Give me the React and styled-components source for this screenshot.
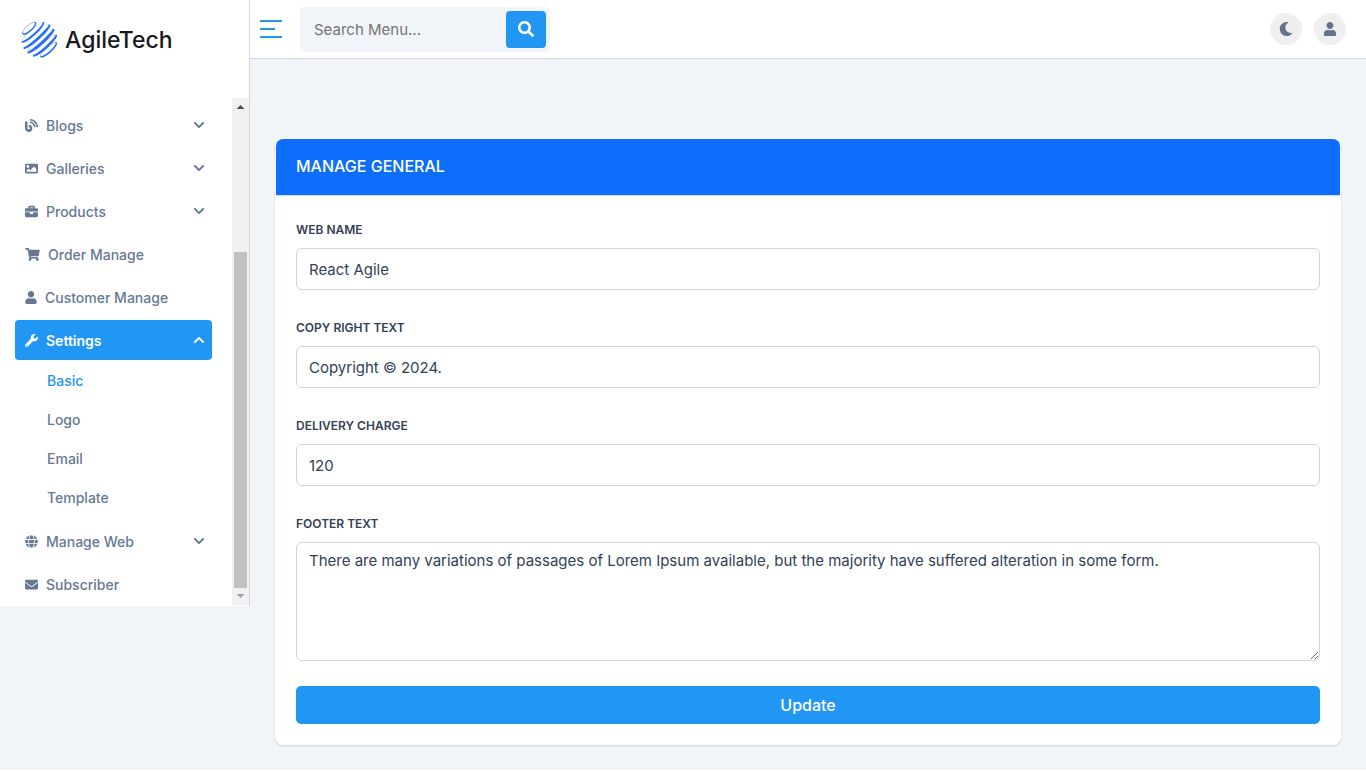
import React, { useState } from "react";
import styled, { createGlobalStyle } from "styled-components";

//Icons
import {
  FaBlog,
  FaBriefcase,
  FaChevronDown,
  FaChevronUp,
  FaEnvelope,
  FaGlobe,
  FaImage,
  FaMoon,
  FaSearch,
  FaShoppingCart,
  FaUser,
  FaWrench,
} from "react-icons/fa";

const GlobalStyle = createGlobalStyle`
  *, *::before, *::after {
    box-sizing: border-box;
  }
  body {
    margin: 0;
    background: #ffffff;
    color: #334155;
    font-family: "Inter", "Liberation Sans", sans-serif;
    font-size: 15px;
  }
  button, input, textarea {
    font-family: inherit;
  }
`;

const Layout = styled.div`
  display: flex;
  align-items: flex-start;
  background: #f1f4f9;
`;

const Sidebar = styled.aside`
  flex: 0 0 250px;
  background: #ffffff;
  border-right: 1px solid #d3d5d8;
  padding-bottom: 1px;
`;

const Brand = styled.a`
  display: flex;
  align-items: center;
  gap: 7px;
  height: 98px;
  padding: 0 20px 20px;
  color: #18191c;
  font-size: 23px;
  font-weight: 500;
  text-decoration: none;
`;

const BrandName = styled.span`
  padding-top: 2px;
`;

const Scroller = styled.div`
  display: flex;
`;

const Nav = styled.nav`
  flex: 1;
  display: flex;
  flex-direction: column;
  gap: 3px;
  padding: 7px 20px 1px 15px;
`;

const NavRow = styled.button`
  display: flex;
  align-items: center;
  gap: 8px;
  width: 100%;
  height: 40px;
  padding: 0 7px 0 10px;
  border: none;
  border-radius: 4px;
  background: ${({ $active }) => ($active ? "#2196f3" : "transparent")};
  color: ${({ $active }) => ($active ? "#ffffff" : "#667894")};
  font-size: 14px;
  font-weight: ${({ $active }) => ($active ? 600 : 500)};
  text-align: left;
  text-decoration: none;
  cursor: pointer;

  svg:first-child {
    width: ${({ $iconWidth }) => $iconWidth || 13}px;
    height: 13px;
  }
  svg:last-child {
    width: 12px;
    height: 12px;
  }
`;

const NavText = styled.span`
  flex: 1;
`;

const SubMenu = styled.div`
  display: flex;
  flex-direction: column;
  padding-top: 2px;
`;

const SubLink = styled.a`
  height: 39px;
  padding-left: 32px;
  line-height: 37px;
  color: ${({ $active }) => ($active ? "#2196f3" : "#667894")};
  font-size: 14px;
  font-weight: 500;
  text-decoration: none;
`;

const ScrollTrack = styled.div`
  display: flex;
  flex-direction: column;
  align-items: center;
  width: 17px;
  background: #f1f1f1;
`;

const ScrollArrow = styled.svg`
  width: 17px;
  height: 17px;
  fill: ${({ $dim }) => ($dim ? "#a3a3a3" : "#505050")};
`;

const ScrollThumb = styled.div`
  width: 13px;
  height: 336px;
  margin-top: auto;
  background: #c1c1c1;
`;

const Content = styled.div`
  flex: 1;
  min-width: 0;
`;

const Topbar = styled.header`
  display: flex;
  align-items: center;
  height: 59px;
  padding: 0 20px 0 10px;
  background: #ffffff;
  border-bottom: 1px solid #d3d5d8;
`;

const MenuToggle = styled.button`
  display: flex;
  flex-direction: column;
  gap: 6px;
  width: 22px;
  padding: 0;
  border: none;
  background: none;
  cursor: pointer;
`;

const Bar = styled.span`
  width: ${({ $short }) => ($short ? "15px" : "22px")};
  height: 2px;
  background: #2196f3;
`;

const Search = styled.form`
  display: flex;
  width: 250px;
  height: 45px;
  margin-left: 18px;
  padding: 4px;
  border-radius: 5px;
  background: #f1f4f9;
`;

const SearchInput = styled.input`
  flex: 1;
  min-width: 0;
  padding: 0 10px;
  border: none;
  outline: none;
  background: transparent;
  font-size: 15px;

  &::placeholder {
    color: #757575;
  }
`;

const SearchButton = styled.button`
  display: flex;
  align-items: center;
  justify-content: center;
  width: 40px;
  padding: 0;
  border: none;
  border-radius: 4px;
  background: #2196f3;
  color: #ffffff;
  font-size: 16px;
  cursor: pointer;
`;

const Actions = styled.div`
  display: flex;
  gap: 12px;
  margin-left: auto;
`;

const RoundButton = styled.button`
  display: flex;
  align-items: center;
  justify-content: center;
  width: 32px;
  height: 32px;
  padding: 0;
  border: none;
  border-radius: 50%;
  background: #efefef;
  color: #64748b;
  font-size: 14px;
  cursor: pointer;
`;

const Main = styled.main`
  padding: 79px 25px 25px;
`;

const Card = styled.section`
  border: 1px solid #ffffff;
  border-radius: 8px;
  background: #ffffff;
  box-shadow: 0 1px 2px rgba(24, 40, 60, 0.14);
`;

const CardHeader = styled.div`
  padding: 0 20px 2px;
  border-bottom: 1px solid #cfdcf0;
  border-radius: 7px 7px 0 0;
  background: #0d6efd;
`;

const CardTitle = styled.h1`
  margin: 0;
  color: #ffffff;
  font-size: 16px;
  font-weight: 500;
  line-height: 54px;
  text-transform: uppercase;
`;

const Form = styled.form`
  display: flex;
  flex-direction: column;
  gap: 25px;
  padding: 21px 20px 20px;
`;

const Field = styled.div`
  display: flex;
  flex-direction: column;
  gap: 8px;
`;

const Label = styled.label`
  padding-top: 3px;
  color: #334155;
  font-size: 12px;
  font-weight: 600;
  line-height: 20px;
  text-transform: uppercase;
`;

const Input = styled.input`
  width: 100%;
  height: 42px;
  padding: 0 12px;
  border: 1px solid #d3d5d8;
  border-radius: 6px;
  background: #ffffff;
  color: #334155;
  font-size: 15px;
`;

const TextArea = styled.textarea`
  display: block;
  width: 100%;
  height: 119px;
  padding: 7px 12px;
  border: 1px solid #d3d5d8;
  border-radius: 6px;
  background: #ffffff;
  color: #334155;
  font-size: 15px;
  line-height: 22px;
  resize: vertical;
`;

const SubmitButton = styled.button`
  height: 38px;
  border: none;
  border-radius: 5px;
  background: #2196f3;
  color: #ffffff;
  font-size: 16px;
  font-weight: 500;
  cursor: pointer;
`;

const settingsLinks = ["Basic", "Logo", "Email", "Template"];

// offset from the centre of the globe and weight of each ring
const rings = [
  { y: -14.5, rx: 9, w: 1 },
  { y: -9, rx: 15, w: 1.7 },
  { y: -3, rx: 18, w: 2.4 },
  { y: 3, rx: 18, w: 2.7 },
  { y: 9, rx: 16, w: 2.2 },
  { y: 14.5, rx: 11, w: 1.3 },
];

const ellipse = (y, rx, ry) =>
  `M${-rx} ${y}a${rx} ${ry} 0 1 0 ${rx * 2} 0a${rx} ${ry} 0 1 0 ${-rx * 2} 0z`;

const LogoMark = () => (
  <svg width="38" height="38" viewBox="-19 -19 38 38" aria-hidden="true">
    <g transform="rotate(-42)" fill="#2a6ff5" fillRule="evenodd">
      {rings.map(({ y, rx, w }) => (
        <path
          key={y}
          d={ellipse(y, rx, 3.3) + ellipse(y - w / 2, rx - 1.2, 2.9 - w / 2)}
        />
      ))}
    </g>
  </svg>
);

const App = () => {
  const [open, setOpen] = useState("Settings");
  const [search, setSearch] = useState("");
  const [general, setGeneral] = useState({
    webName: "React Agile",
    copyright: "Copyright © 2024.",
    delivery: "120",
    footer:
      "There are many variations of passages of Lorem Ipsum available, but the majority have suffered alteration in some form.",
  });

  const onChangeHandle = (e) => {
    setGeneral({ ...general, [e.target.id]: e.target.value });
  };

  const onSubmitHandle = (e) => {
    e.preventDefault();
  };

  const renderGroup = (name, icon) => (
    <NavRow
      type="button"
      $active={open === name}
      aria-expanded={open === name}
      onClick={() => setOpen(open === name ? "" : name)}
    >
      {icon}
      <NavText>{name}</NavText>
      {open === name ? <FaChevronUp /> : <FaChevronDown />}
    </NavRow>
  );

  return (
    <>
      <GlobalStyle />
      <Layout>
        <Sidebar>
          <Brand href="#home">
            <LogoMark />
            <BrandName>AgileTech</BrandName>
          </Brand>
          <Scroller>
            <Nav>
              {renderGroup("Blogs", <FaBlog />)}
              {renderGroup("Galleries", <FaImage />)}
              {renderGroup("Products", <FaBriefcase />)}
              <NavRow as="a" href="#orders" $iconWidth={15}>
                <FaShoppingCart />
                <NavText>Order Manage</NavText>
              </NavRow>
              <NavRow as="a" href="#customers" $iconWidth={12}>
                <FaUser />
                <NavText>Customer Manage</NavText>
              </NavRow>
              <div>
                {renderGroup("Settings", <FaWrench />)}
                {open === "Settings" && (
                  <SubMenu>
                    {settingsLinks.map((link) => (
                      <SubLink
                        key={link}
                        href={`#${link.toLowerCase()}`}
                        $active={link === "Basic"}
                      >
                        {link}
                      </SubLink>
                    ))}
                  </SubMenu>
                )}
              </div>
              {renderGroup("Manage Web", <FaGlobe />)}
              <NavRow as="a" href="#subscribers">
                <FaEnvelope />
                <NavText>Subscriber</NavText>
              </NavRow>
            </Nav>
            <ScrollTrack aria-hidden="true">
              <ScrollArrow viewBox="0 0 17 17">
                <path d="M4.5 11h8l-4-4z" />
              </ScrollArrow>
              <ScrollThumb />
              <ScrollArrow viewBox="0 0 17 17" $dim>
                <path d="M4.5 6h8l-4 4z" />
              </ScrollArrow>
            </ScrollTrack>
          </Scroller>
        </Sidebar>

        <Content>
          <Topbar>
            <MenuToggle type="button" aria-label="Toggle menu">
              <Bar />
              <Bar $short />
              <Bar />
            </MenuToggle>
            <Search onSubmit={onSubmitHandle}>
              <SearchInput
                type="text"
                aria-label="Search menu"
                placeholder="Search Menu..."
                value={search}
                onChange={(e) => setSearch(e.target.value)}
              />
              <SearchButton type="submit" aria-label="Search">
                <FaSearch />
              </SearchButton>
            </Search>
            <Actions>
              <RoundButton type="button" aria-label="Dark mode">
                <FaMoon />
              </RoundButton>
              <RoundButton type="button" aria-label="Account">
                <FaUser />
              </RoundButton>
            </Actions>
          </Topbar>

          <Main>
            <Card>
              <CardHeader>
                <CardTitle>Manage General</CardTitle>
              </CardHeader>
              <Form onSubmit={onSubmitHandle}>
                <Field>
                  <Label htmlFor="webName">Web Name</Label>
                  <Input
                    type="text"
                    id="webName"
                    value={general.webName}
                    onChange={onChangeHandle}
                  />
                </Field>
                <Field>
                  <Label htmlFor="copyright">Copy Right Text</Label>
                  <Input
                    type="text"
                    id="copyright"
                    value={general.copyright}
                    onChange={onChangeHandle}
                  />
                </Field>
                <Field>
                  <Label htmlFor="delivery">Delivery Charge</Label>
                  <Input
                    type="text"
                    id="delivery"
                    value={general.delivery}
                    onChange={onChangeHandle}
                  />
                </Field>
                <Field>
                  <Label htmlFor="footer">Footer Text</Label>
                  <TextArea
                    id="footer"
                    value={general.footer}
                    onChange={onChangeHandle}
                  />
                </Field>
                <SubmitButton type="submit">Update</SubmitButton>
              </Form>
            </Card>
          </Main>
        </Content>
      </Layout>
    </>
  );
};

export default App;
